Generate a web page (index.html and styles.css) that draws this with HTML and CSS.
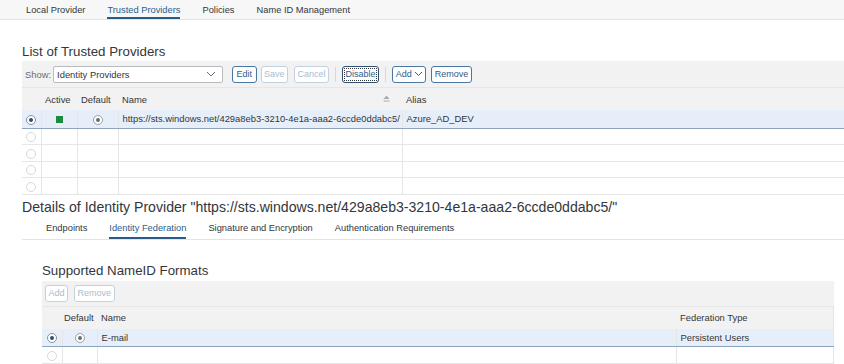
FILE: index.html
```html
<!DOCTYPE html>
<html lang="en">
<head>
<meta charset="utf-8">
<title>Trusted Providers</title>
<link rel="stylesheet" href="styles.css">
</head>
<body>
<nav class="tabbar">
  <span class="tab">Local Provider</span>
  <span class="tab active">Trusted Providers</span>
  <span class="tab">Policies</span>
  <span class="tab">Name ID Management</span>
</nav>
<main class="page">
  <h2 class="title">List of Trusted Providers</h2>
  <div class="toolbar">
    <span class="show">Show:</span>
    <div class="select">
      <span>Identity Providers</span>
      <svg class="chev" width="10" height="6" viewBox="0 0 10 6"><polyline points="1,1 5,5 9,1" fill="none" stroke="#6a6d70" stroke-width="1"/></svg>
    </div>
    <button class="btn btn-edit">Edit</button>
    <button class="btn dis btn-save">Save</button>
    <button class="btn dis btn-cancel">Cancel</button>
    <span class="sep"></span>
    <button class="btn focus">Disable</button>
    <span class="sep"></span>
    <button class="btn btn-add">Add<svg class="chev-s" width="9" height="6" viewBox="0 0 9 6"><polyline points="1,1 4.5,4.5 8,1" fill="none" stroke="#2c5d8f" stroke-width="1"/></svg></button>
    <button class="btn">Remove</button>
  </div>
  <table class="grid grid-top">
    <colgroup>
      <col class="c-sel"><col class="c-active"><col class="c-default"><col class="c-name"><col>
    </colgroup>
    <thead>
      <tr><th></th><th>Active</th><th>Default</th><th>Name<svg class="sort" width="7" height="7" viewBox="0 0 7 7"><polygon points="3.5,0.5 6.5,4 0.5,4" fill="#a7abb0"/><rect x="0.5" y="5.5" width="6" height="1" fill="#a7abb0"/></svg></th><th>Alias</th></tr>
    </thead>
    <tbody>
      <tr class="selected">
        <td class="center"><span class="radio on"></span></td>
        <td class="center"><span class="status"></span></td>
        <td class="center"><span class="radio def"></span></td>
        <td>https://sts.windows.net/429a8eb3-3210-4e1a-aaa2-6ccde0ddabc5/</td>
        <td>Azure_AD_DEV</td>
      </tr>
      <tr class="empty"><td class="center"><span class="radio off"></span></td><td></td><td></td><td></td><td></td></tr>
      <tr class="empty"><td class="center"><span class="radio off"></span></td><td></td><td></td><td></td><td></td></tr>
      <tr class="empty"><td class="center"><span class="radio off"></span></td><td></td><td></td><td></td><td></td></tr>
      <tr class="empty"><td class="center"><span class="radio off"></span></td><td></td><td></td><td></td><td></td></tr>
    </tbody>
  </table>

  <h2 class="title2">Details of Identity Provider "https://sts.windows.net/429a8eb3-3210-4e1a-aaa2-6ccde0ddabc5/"</h2>
  <nav class="subtabs">
    <span class="tab">Endpoints</span>
    <span class="tab active">Identity Federation</span>
    <span class="tab">Signature and Encryption</span>
    <span class="tab">Authentication Requirements</span>
  </nav>

  <section class="sub">
    <h3 class="title3">Supported NameID Formats</h3>
    <div class="toolbar toolbar-sub">
      <button class="btn dis">Add</button>
      <button class="btn dis">Remove</button>
    </div>
    <table class="grid grid-sub">
      <colgroup>
        <col class="c-sel2"><col class="c-default2"><col class="c-name2"><col>
      </colgroup>
      <thead>
        <tr><th></th><th>Default</th><th>Name</th><th>Federation Type</th></tr>
      </thead>
      <tbody>
        <tr class="selected">
          <td class="center"><span class="radio on"></span></td>
          <td class="center"><span class="radio def"></span></td>
          <td>E-mail</td>
          <td>Persistent Users</td>
        </tr>
        <tr class="empty"><td class="center"><span class="radio off"></span></td><td></td><td></td><td></td></tr>
      </tbody>
    </table>
  </section>
</main>
</body>
</html>
```

FILE: styles.css
```css
* { box-sizing: border-box; }

html, body {
  margin: 0;
  padding: 0;
  background: #ffffff;
  font-family: "Liberation Sans", Arial, sans-serif;
  color: #32363a;
  overflow: hidden;
}

/* top tab bar */
.tabbar {
  display: flex;
  gap: 22px;
  height: 20px;
  padding-left: 26px;
  background: #f7f7f7;
  border-bottom: 1px solid #e4e4e4;
}

.tab {
  font-size: 9.3px;
  line-height: 12px;
  padding-top: 4px;
  padding-bottom: 1px;
  border-bottom: 2px solid transparent;
  color: #32363a;
  white-space: nowrap;
}

.tab.active {
  color: #2b5e8e;
  border-bottom-color: #2a5a88;
}

.page {
  padding-left: 22px;
}

.title {
  margin: 0;
  font-size: 13.3px;
  font-weight: normal;
  line-height: 16px;
  padding: 24px 0 1px;
  color: #32363a;
}

/* toolbar */
.toolbar {
  display: flex;
  align-items: center;
  gap: 5px;
  height: 27px;
  padding-left: 3px;
  background: #f2f2f2;
  border-bottom: 1px solid #e6e6e6;
  font-size: 9.4px;
}

.show {
  color: #6a6d70;
  margin-right: -3px;
}

.select {
  display: flex;
  align-items: center;
  justify-content: space-between;
  width: 170px;
  height: 17px;
  padding: 0 6px 0 3px;
  background: #fff;
  border: 1px solid #b8bcc0;
  border-radius: 2px;
  color: #32363a;
  margin-right: 4px;
}

.btn {
  display: inline-flex;
  align-items: center;
  height: 17px;
  padding: 0 2.5px;
  font-family: inherit;
  font-size: 9px;
  color: #2c5d8f;
  background: #fff;
  border: 1px solid #4a76a3;
  border-radius: 3px;
  white-space: nowrap;
}

.btn-edit { padding: 0 3.5px; }

.btn.dis {
  color: #a8bdd2;
  border-color: #c3d1df;
}

.btn-save { margin-left: -1px; }
.btn-cancel { margin-left: 1px; }

.btn.focus {
  color: #2c5d8f;
  border-color: #2f4f70;
  outline: 1px dotted #32363a;
  outline-offset: -3px;
}

.btn-add { gap: 2px; }

.sep {
  width: 1px;
  height: 15px;
  background: #d5d7d9;
  margin: 0 1px;
}

/* grids */
.grid {
  border-collapse: collapse;
  table-layout: fixed;
  font-size: 9.4px;
}

.grid-top { width: 822px; }

.c-sel { width: 19px; }
.c-active { width: 36px; }
.c-default { width: 41px; }
.c-name { width: 284px; }

.grid th {
  height: 22px;
  padding: 0 0 0 4px;
  font-weight: normal;
  text-align: left;
  background: #f2f2f2;
  color: #32363a;
  white-space: nowrap;
}

.grid td {
  padding: 0 0 0 4px;
  border-left: 1px solid #e6e6e6;
  border-bottom: 1px solid #e6e6e6;
  white-space: nowrap;
  overflow: hidden;
}

.grid td:first-child { border-left: 0; }

.grid td.center {
  text-align: center;
  padding: 0;
}

.grid tr.selected td {
  height: 18px;
  background: #e6eff9;
  border-bottom: 1px solid #8ea4bd;
}

.grid tr.empty td {
  height: 16.5px;
}

.sort {
  float: right;
  margin: 1px 12px 0 0;
}

.radio {
  display: inline-block;
  position: relative;
  width: 10px;
  height: 10px;
  border-radius: 50%;
  border: 1px solid #8a9096;
  background: #fff;
  vertical-align: middle;
}

.radio.on::after,
.radio.def::after {
  content: "";
  position: absolute;
  left: 2px;
  top: 2px;
  width: 4px;
  height: 4px;
  border-radius: 50%;
  background: #2b4f7f;
}

.radio.def { border-color: #9ba0a6; }
.radio.def::after { background: #6a6d70; }

.radio.off { border-color: #d6d8da; }

.status {
  display: inline-block;
  width: 7px;
  height: 7px;
  background: #1d8a3e;
  vertical-align: middle;
}

/* details */
.title2 {
  margin: 0;
  padding-top: 4px;
  font-size: 14.1px;
  font-weight: normal;
  line-height: 17px;
  color: #32363a;
  white-space: nowrap;
}

.subtabs {
  display: flex;
  gap: 22px;
  padding-left: 24px;
  border-bottom: 1px solid #e4e4e4;
}

.subtabs .tab {
  padding-top: 6px;
  padding-bottom: 3px;
}

.sub {
  padding-left: 20px;
  padding-right: 10px;
}

.title3 {
  margin: 0;
  font-size: 13.3px;
  font-weight: normal;
  line-height: 16px;
  padding: 23px 0 2px;
  color: #32363a;
}

.toolbar-sub {
  height: 26px;
  gap: 6px;
}

.grid-sub { width: 792px; }

.c-sel2 { width: 20px; }
.c-default2 { width: 35px; }
.c-name2 { width: 579px; }

.grid-sub th:nth-child(2) { padding-left: 2px; }
.grid-sub td:last-child,
.grid-sub th:last-child { border-right: 1px solid #e6e6e6; }
```
